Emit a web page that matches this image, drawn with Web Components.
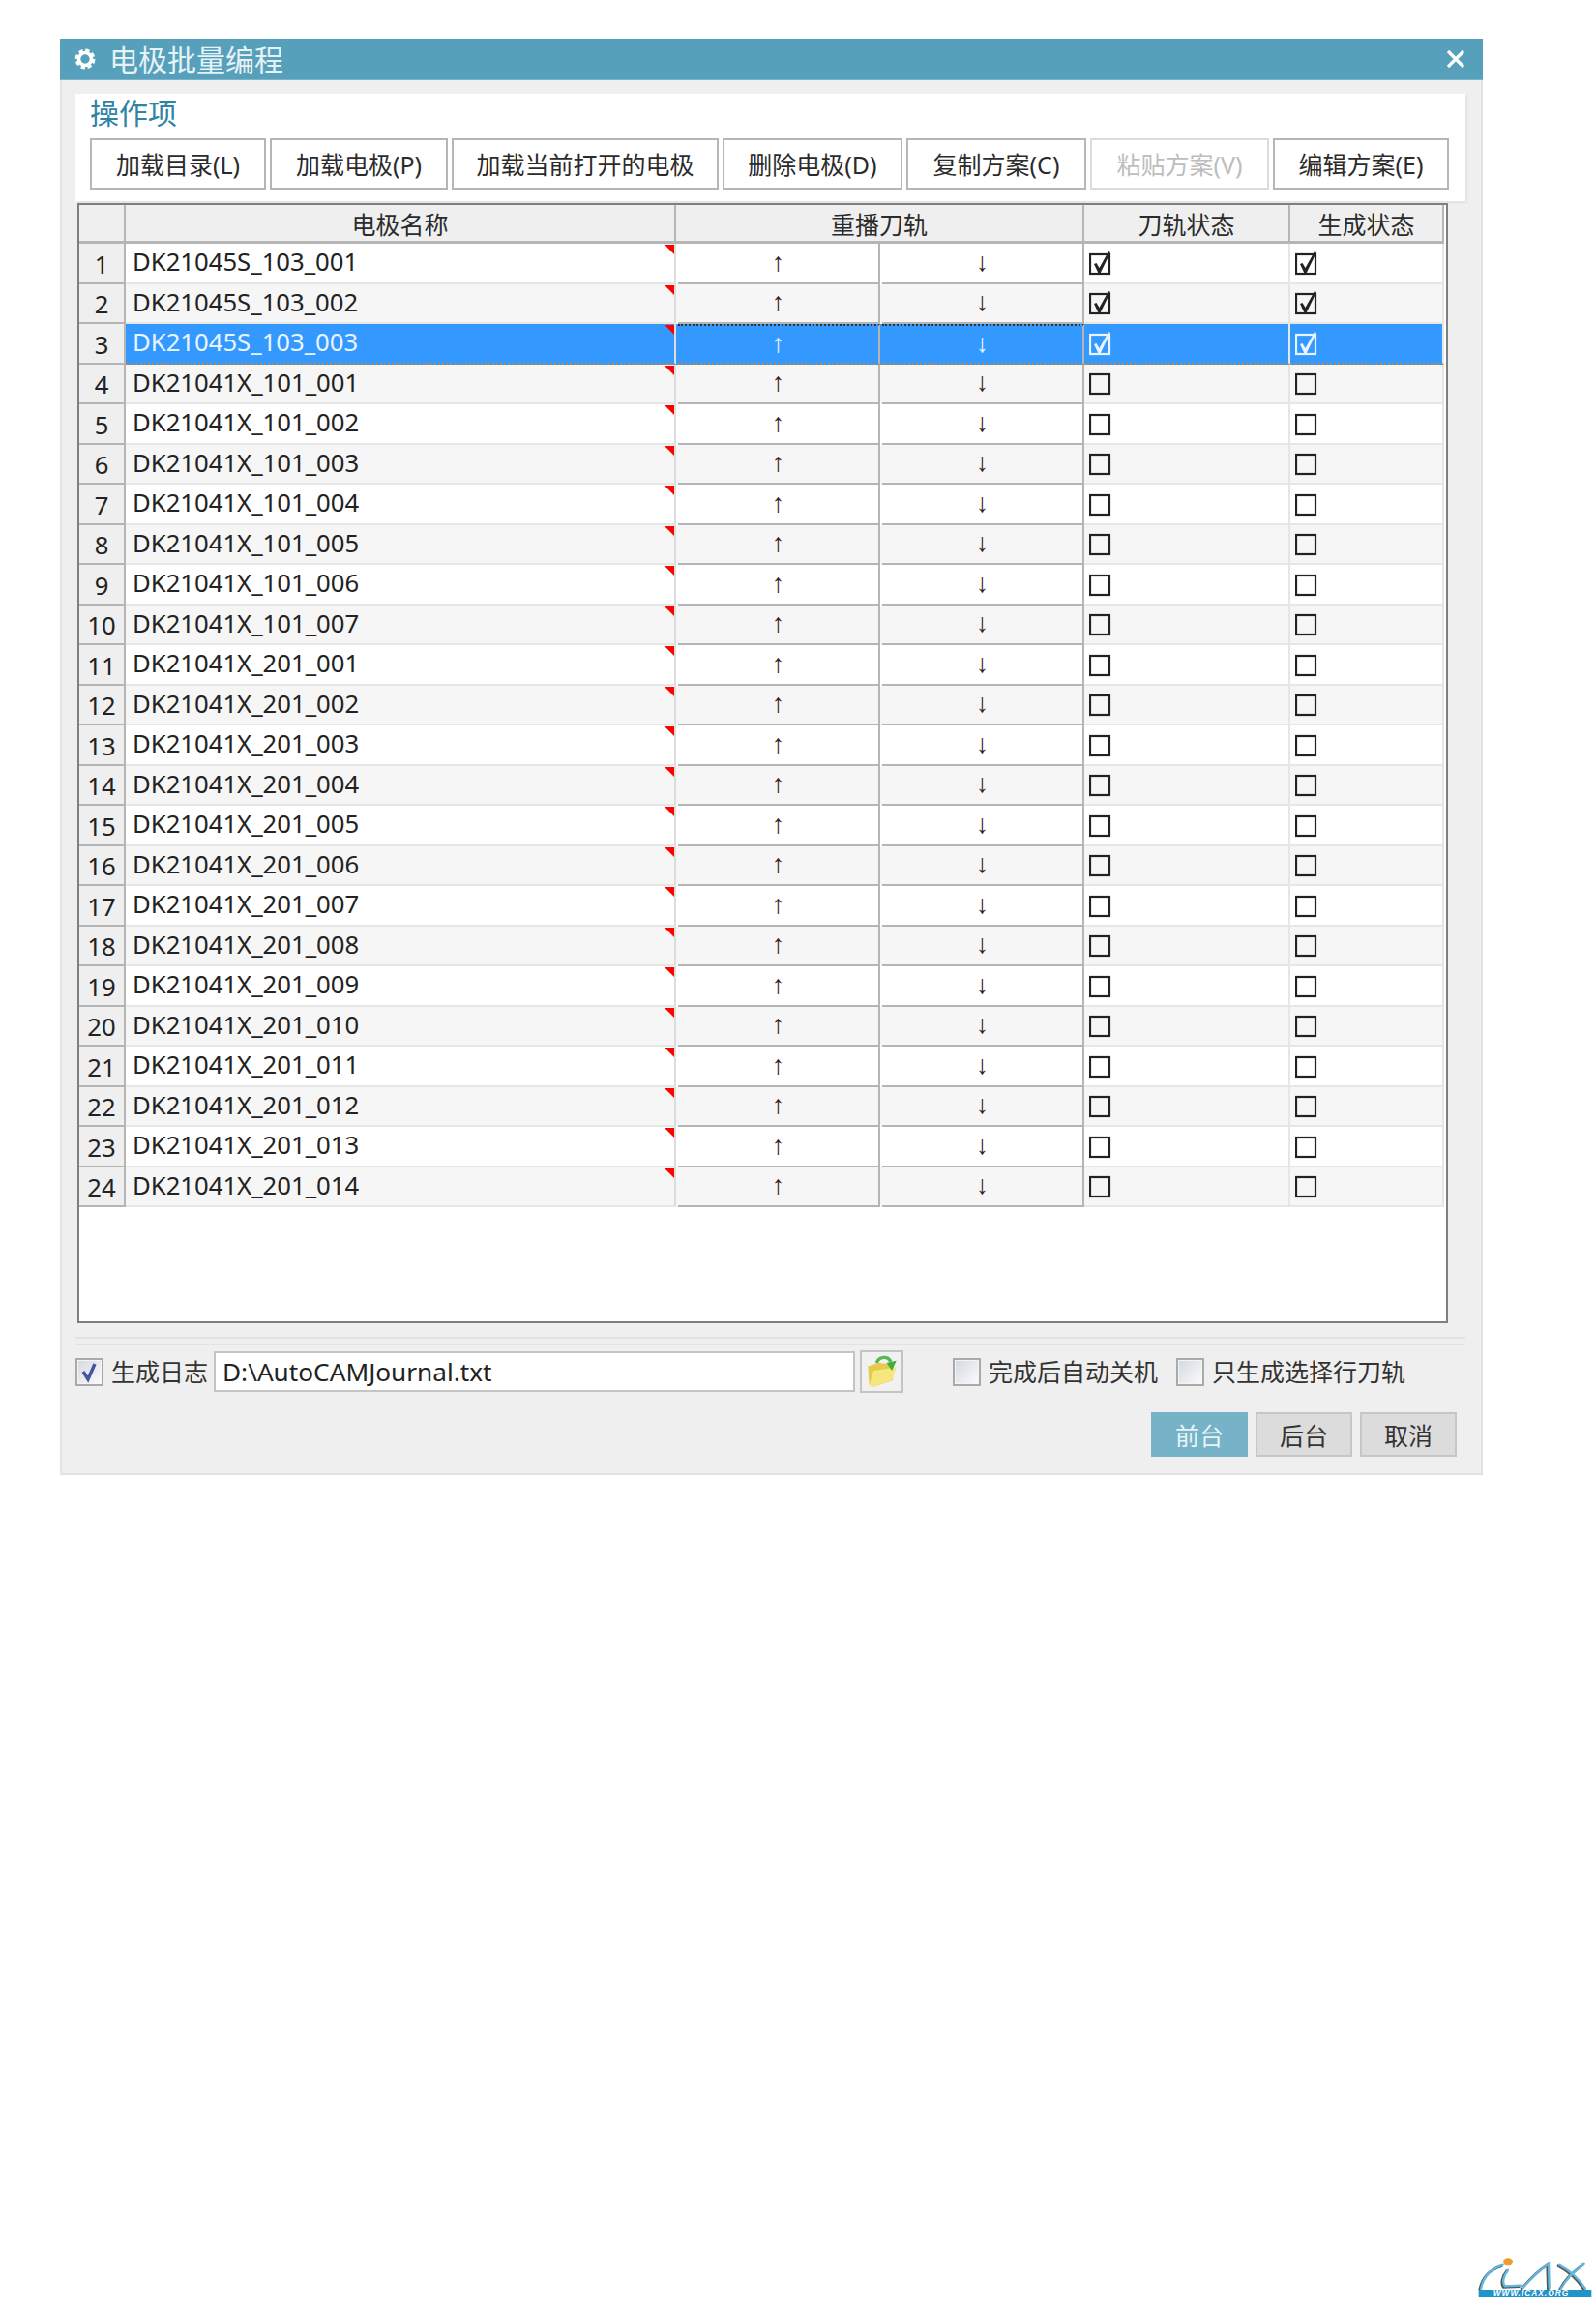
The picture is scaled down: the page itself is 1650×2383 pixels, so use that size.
<!DOCTYPE html>
<html lang="zh">
<head>
<meta charset="utf-8">
<title>电极批量编程</title>
<style>
  html, body { margin: 0; padding: 0; background: #fff; overflow: hidden; }
  body { font-family: "Noto Sans", "Noto Sans CJK SC", sans-serif; color: #222; }
</style>
</head>
<body>
<cam-page>
  <cam-dialog heading="电极批量编程">
    <cam-toolbar heading="操作项">
      <cam-button style="width:182px">加载目录(L)</cam-button>
      <cam-button style="width:184px">加载电极(P)</cam-button>
      <cam-button style="width:276px">加载当前打开的电极</cam-button>
      <cam-button style="width:186px">删除电极(D)</cam-button>
      <cam-button style="width:186px">复制方案(C)</cam-button>
      <cam-button style="width:185px" disabled>粘贴方案(V)</cam-button>
      <cam-button style="width:182px">编辑方案(E)</cam-button>
    </cam-toolbar>
    <cam-table id="table"></cam-table>
    <cam-footer>
      <cam-option checked style="width:143px">生成日志</cam-option>
      <cam-path>D:\AutoCAMJournal.txt</cam-path>
      <cam-option style="margin-left:51px;width:231px">完成后自动关机</cam-option>
      <cam-option>只生成选择行刀轨</cam-option>
      <cam-action slot="actions" primary>前台</cam-action>
      <cam-action slot="actions">后台</cam-action>
      <cam-action slot="actions">取消</cam-action>
    </cam-footer>
  </cam-dialog>
  <cam-logo></cam-logo>
</cam-page>

<script>
const pageTemplate = document.createElement('template')
pageTemplate.innerHTML = `
<style>
  :host { display: flex; flex-direction: column; align-items: flex-start; height: 2383px; box-sizing: border-box; padding: 40px 3px 6px 62px; }
  ::slotted(cam-logo) { margin-top: auto; align-self: flex-end; }
</style>
<slot></slot>
`

/**
 * The white page that carries the dialog and the watermark logo.
 */
class CamPage extends HTMLElement {
  constructor () {
    super()
    this.attachShadow({ mode: 'open' })
    this.shadowRoot.appendChild(pageTemplate.content.cloneNode(true))
  }
}

const dialogTemplate = document.createElement('template')
dialogTemplate.innerHTML = `
<style>
  :host { display: block; width: 1471px; height: 1485px; box-sizing: border-box; background: #efefef; border: solid #e2e2e2; border-width: 0 2px 2px 2px; }
  .title { display: flex; align-items: center; height: 43px; margin: 0 -2px; padding: 0 18px 3px 14px; background: #56a0bb; color: #e6f2f6; font: 30px "Noto Sans CJK SC", sans-serif; border-bottom: 1px solid #7ab4c9; box-sizing: border-box; }
  .gear { width: 24px; height: 24px; margin: 3px 13px 0 0; }
  .name { flex: 1; }
  .close { width: 20px; height: 20px; margin-top: 3px; }
</style>
<div class="title">
  <svg class="gear" viewBox="0 0 24 24">
    <circle cx="12" cy="12" r="8.6" fill="none" stroke="#fff" stroke-width="3.6" stroke-dasharray="4.2 2.55"/>
    <circle cx="12" cy="12" r="6.5" fill="none" stroke="#fff" stroke-width="3.6"/>
  </svg>
  <span class="name"></span>
  <svg class="close" viewBox="0 0 20 20"><path d="M2 2 18 18M18 2 2 18" stroke="#fff" stroke-width="3.2"/></svg>
</div>
<slot></slot>
`

/**
 * The dialog window: a title bar and whatever is passed in below it.
 */
class CamDialog extends HTMLElement {
  constructor () {
    super()
    this.attachShadow({ mode: 'open' })
    this.shadowRoot.appendChild(dialogTemplate.content.cloneNode(true))
    this.shadowRoot.querySelector('.name').textContent = this.getAttribute('heading')
  }
}

const toolbarTemplate = document.createElement('template')
toolbarTemplate.innerHTML = `
<style>
  :host { display: block; box-sizing: border-box; width: 1437px; height: 111px; margin: 14px 0 0 14px; padding: 0 0 0 15px; background: #fff; box-shadow: 2px 2px 2px #e4e4e4; }
  .heading { height: 46px; font: 30px/36px "Noto Sans CJK SC", sans-serif; color: #2f84a6; }
  .buttons { display: flex; gap: 4px; }
</style>
<div class="heading"></div>
<div class="buttons"><slot></slot></div>
`

/**
 * The white group box with the row of operation buttons.
 */
class CamToolbar extends HTMLElement {
  constructor () {
    super()
    this.attachShadow({ mode: 'open' })
    this.shadowRoot.appendChild(toolbarTemplate.content.cloneNode(true))
    this.shadowRoot.querySelector('.heading').textContent = this.getAttribute('heading')
  }
}

const buttonTemplate = document.createElement('template')
buttonTemplate.innerHTML = `
<style>
  :host { display: flex; align-items: center; justify-content: center; box-sizing: border-box; height: 53px; padding-bottom: 2px; background: #fff; border: 2px solid #b6b6b6; font: 25px "Noto Sans", "Noto Sans CJK SC", sans-serif; color: #2b2b2b; white-space: nowrap; }
  :host([disabled]) { color: #bdbdbd; border-color: #dcdcdc; }
</style>
<slot></slot>
`

/**
 * A flat toolbar button.
 */
class CamButton extends HTMLElement {
  constructor () {
    super()
    this.attachShadow({ mode: 'open' })
    this.shadowRoot.appendChild(buttonTemplate.content.cloneNode(true))
  }
}

const tableTemplate = document.createElement('template')
tableTemplate.innerHTML = `
<style>
  :host { display: block; box-sizing: border-box; width: 1417px; height: 1158px; margin: 2px 0 0 16px; background: #fff; border: 2px solid #7f7f7f; }
  .head { display: grid; grid-template-columns: 48px 569px 422px 213px 159px; width: 1411px; height: 40px; font: 25px "Noto Sans CJK SC", sans-serif; color: #2b2b2b; }
  .head div { display: flex; align-items: center; justify-content: center; box-sizing: border-box; background: #efefef; border-right: 2px solid #b5b5b5; border-bottom: 3px solid #b5b5b5; }
</style>
<div class="head">
  <div></div><div>电极名称</div><div>重播刀轨</div><div>刀轨状态</div><div>生成状态</div>
</div>
<slot></slot>
`

/**
 * The grid of electrodes: a fixed header and rows passed in as cam-row.
 */
class CamTable extends HTMLElement {
  constructor () {
    super()
    this.attachShadow({ mode: 'open' })
    this.shadowRoot.appendChild(tableTemplate.content.cloneNode(true))
  }
}

const tick = '<path d="M5 14 7.5 13 10.5 18 20 1 22 2 11.5 23.5 9.5 23.5Z" fill="currentColor"/>'
const rowTemplate = document.createElement('template')
rowTemplate.innerHTML = `
<style>
  :host { display: grid; grid-template-columns: 48px 569px 211px 211px 213px 159px; width: 1411px; height: 41.5px; background: #fff; color: #222; font: 25.7px "Noto Sans", sans-serif; }
  :host([shade]) { background: #f6f6f6; }
  :host([selected]) { background: #3399ff; color: #eaf4ff; }
  div { display: flex; align-items: center; box-sizing: border-box; min-width: 0; border-bottom: 2px solid #e6e6e6; border-right: 2px solid #e6e6e6; }
  .num { justify-content: center; background: #efefef; color: #222; border-color: #b5b5b5; padding-top: 3px; }
  .name { position: relative; padding: 0 0 2px 7px; border-right-color: #dcdcdc; white-space: nowrap; }
  .name::after { content: ""; position: absolute; top: 1px; right: 0; border-top: 10px solid #f00; border-left: 10px solid transparent; }
  .go { justify-content: center; border-color: #b5b5b5; margin-left: 2px; padding-bottom: 1px; font: bold 27px "Liberation Sans", sans-serif; color: #3a1a1a; }
  .state { padding: 0 0 0 5px; }
  :host([selected]) div:not(.num) { border-bottom: 2px dotted #b8864a; }
  :host([selected]) .go { border-top: 2px dotted #333; color: #eaf4ff; }
  svg { width: 24px; height: 26px; }
</style>
<div class="num"></div>
<div class="name"></div>
<div class="go">↑</div>
<div class="go">↓</div>
<div class="state"></div>
<div class="state"></div>
`

/**
 * One electrode row. Attributes: index, name, done, plus selected and shade for its look.
 */
class CamRow extends HTMLElement {
  constructor () {
    super()
    this.attachShadow({ mode: 'open' })
    this.shadowRoot.appendChild(rowTemplate.content.cloneNode(true))
  }

  /**
   * Fills in the cells from the attributes.
   */
  connectedCallback () {
    this.shadowRoot.querySelector('.num').textContent = this.getAttribute('index')
    this.shadowRoot.querySelector('.name').textContent = this.getAttribute('name')
    const mark = this.hasAttribute('done') ? tick : ''
    const box = `<svg viewBox="0 0 24 26"><rect x="1" y="4" width="20" height="20" fill="none" stroke="currentColor" stroke-width="2.2"/>${mark}</svg>`
    this.shadowRoot.querySelectorAll('.state').forEach(cell => { cell.innerHTML = box })
  }
}

const footerTemplate = document.createElement('template')
footerTemplate.innerHTML = `
<style>
  :host { display: block; margin: 14px 0 0 14px; width: 1437px; }
  .rule { box-sizing: border-box; border-top: 2px solid #e2e2e2; border-bottom: 2px solid #e2e2e2; height: 9px; }
  .options { display: flex; align-items: center; height: 44px; margin-top: 5px; }
  .actions { display: flex; justify-content: flex-end; gap: 8px; margin: 20px 9px 0 0; }
</style>
<div class="rule"></div>
<div class="options"><slot></slot></div>
<div class="actions"><slot name="actions"></slot></div>
`

/**
 * The bottom of the dialog: journal file, options and the run buttons.
 */
class CamFooter extends HTMLElement {
  constructor () {
    super()
    this.attachShadow({ mode: 'open' })
    this.shadowRoot.appendChild(footerTemplate.content.cloneNode(true))
  }
}

const optionTemplate = document.createElement('template')
optionTemplate.innerHTML = `
<style>
  :host { display: flex; align-items: center; gap: 8px; flex: none; box-sizing: border-box; font: 25px/30px "Noto Sans CJK SC", sans-serif; color: #333; white-space: nowrap; }
  .box { display: block; box-sizing: border-box; width: 29px; height: 29px; margin-top: 1px; border: 2px solid #a9a9a9; background: linear-gradient(135deg, #d3d9e2, #fbfbfb); box-shadow: inset 0 0 0 1px #f4f4f4; }
  .text { display: block; margin-top: -3px; }
  svg { display: none; width: 25px; height: 25px; }
  :host([checked]) svg { display: block; }
</style>
<span class="box"><svg viewBox="0 0 25 25"><path d="M6 12 11 20 18 4" fill="none" stroke="#45569f" stroke-width="3.4"/></svg></span>
<span class="text"><slot></slot></span>
`

/**
 * A check box with its label, in the dialog's own look.
 */
class CamOption extends HTMLElement {
  constructor () {
    super()
    this.attachShadow({ mode: 'open' })
    this.shadowRoot.appendChild(optionTemplate.content.cloneNode(true))
  }
}

const pathTemplate = document.createElement('template')
pathTemplate.innerHTML = `
<style>
  :host { display: flex; align-items: stretch; gap: 5px; flex: none; height: 44px; }
  .field { display: flex; align-items: center; box-sizing: border-box; width: 663px; height: 42px; margin-top: 1px; padding: 0 0 0 7px; background: #fff; border: 2px solid #c4c4c4; font: 26.2px "Noto Sans", sans-serif; color: #222; }
  .browse { display: flex; align-items: center; justify-content: center; box-sizing: border-box; width: 45px; background: #f1f1f1; border: 2px solid #c4c4c4; }
  svg { width: 36px; height: 36px; }
</style>
<div class="field"><slot></slot></div>
<div class="browse">
  <svg viewBox="0 0 32 32">
    <path d="M3 11 12 8 24 9 26 24 8 30 4 28Z" fill="#e6c94e"/>
    <path d="M4 29 8 15 29 12 25 24 8 30Z" fill="#f6e67e"/>
    <path d="M11 8C13 2 21 1 24 7" fill="none" stroke="#58b84e" stroke-width="3"/>
    <path d="M20 8 29 6 25 15Z" fill="#3fae3c"/>
  </svg>
</div>
`

/**
 * The journal file field with the browse button beside it.
 */
class CamPath extends HTMLElement {
  constructor () {
    super()
    this.attachShadow({ mode: 'open' })
    this.shadowRoot.appendChild(pathTemplate.content.cloneNode(true))
  }
}

const actionTemplate = document.createElement('template')
actionTemplate.innerHTML = `
<style>
  :host { display: flex; align-items: center; justify-content: center; box-sizing: border-box; width: 100px; height: 46px; background: #dcdcdc; border: 2px solid #c6c6c6; font: 25px "Noto Sans CJK SC", sans-serif; color: #333; }
  :host([primary]) { background: #76b3c9; border-color: #76b3c9; color: #e8f3f7; }
</style>
<slot></slot>
`

/**
 * A run button at the bottom right.
 */
class CamAction extends HTMLElement {
  constructor () {
    super()
    this.attachShadow({ mode: 'open' })
    this.shadowRoot.appendChild(actionTemplate.content.cloneNode(true))
  }
}

const logoTemplate = document.createElement('template')
logoTemplate.innerHTML = `
<style>
  :host { display: block; width: 120px; height: 47px; }
  svg { display: block; }
  text { font: italic bold 25px "Liberation Sans", sans-serif; letter-spacing: 3px; fill: #fff; }
</style>
<svg width="120" height="47" viewBox="80 60 360 141">
  <g fill="none" stroke-linecap="round">
    <g stroke="#555" stroke-width="8" transform="translate(-4 3)">
      <path d="M92 168C100 130 125 105 160 95"/>
      <path d="M176 110C160 130 158 150 166 160L215 158"/>
      <path d="M222 165C240 145 265 115 302 92L304 165"/>
      <path d="M336 95C365 110 395 135 416 168M340 168C360 130 385 110 412 92"/>
    </g>
    <g stroke="#5fb9de" stroke-width="7">
      <path d="M92 168C100 130 125 105 160 95"/>
      <path d="M176 110C160 130 158 150 166 160L215 158"/>
      <path d="M222 165C240 145 265 115 302 92L304 165"/>
      <path d="M336 95C365 110 395 135 416 168M340 168C360 130 385 110 412 92"/>
    </g>
  </g>
  <ellipse cx="176" cy="85" rx="15" ry="12" fill="#ee9a2c"/>
  <rect x="85" y="172" width="350" height="23" fill="#1f94c8"/>
  <text x="130" y="192">WWW.ICAX.ORG</text>
</svg>
`

/**
 * The watermark logo in the corner of the page.
 */
class CamLogo extends HTMLElement {
  constructor () {
    super()
    this.attachShadow({ mode: 'open' })
    this.shadowRoot.appendChild(logoTemplate.content.cloneNode(true))
  }
}

customElements.define('cam-page', CamPage)
customElements.define('cam-dialog', CamDialog)
customElements.define('cam-toolbar', CamToolbar)
customElements.define('cam-button', CamButton)
customElements.define('cam-table', CamTable)
customElements.define('cam-row', CamRow)
customElements.define('cam-footer', CamFooter)
customElements.define('cam-option', CamOption)
customElements.define('cam-path', CamPath)
customElements.define('cam-action', CamAction)
customElements.define('cam-logo', CamLogo)

const names = [
  'DK21045S_103_001', 'DK21045S_103_002', 'DK21045S_103_003',
  'DK21041X_101_001', 'DK21041X_101_002', 'DK21041X_101_003', 'DK21041X_101_004',
  'DK21041X_101_005', 'DK21041X_101_006', 'DK21041X_101_007',
  'DK21041X_201_001', 'DK21041X_201_002', 'DK21041X_201_003', 'DK21041X_201_004',
  'DK21041X_201_005', 'DK21041X_201_006', 'DK21041X_201_007', 'DK21041X_201_008',
  'DK21041X_201_009', 'DK21041X_201_010', 'DK21041X_201_011', 'DK21041X_201_012',
  'DK21041X_201_013', 'DK21041X_201_014'
]
const table = document.querySelector('#table')
names.forEach((name, i) => {
  const row = document.createElement('cam-row')
  row.setAttribute('index', i + 1)
  row.setAttribute('name', name)
  if (i < 3) row.setAttribute('done', '')
  if (i === 2) row.setAttribute('selected', '')
  if (i % 2 === 1) row.setAttribute('shade', '')
  table.appendChild(row)
})
</script>
</body>
</html>
